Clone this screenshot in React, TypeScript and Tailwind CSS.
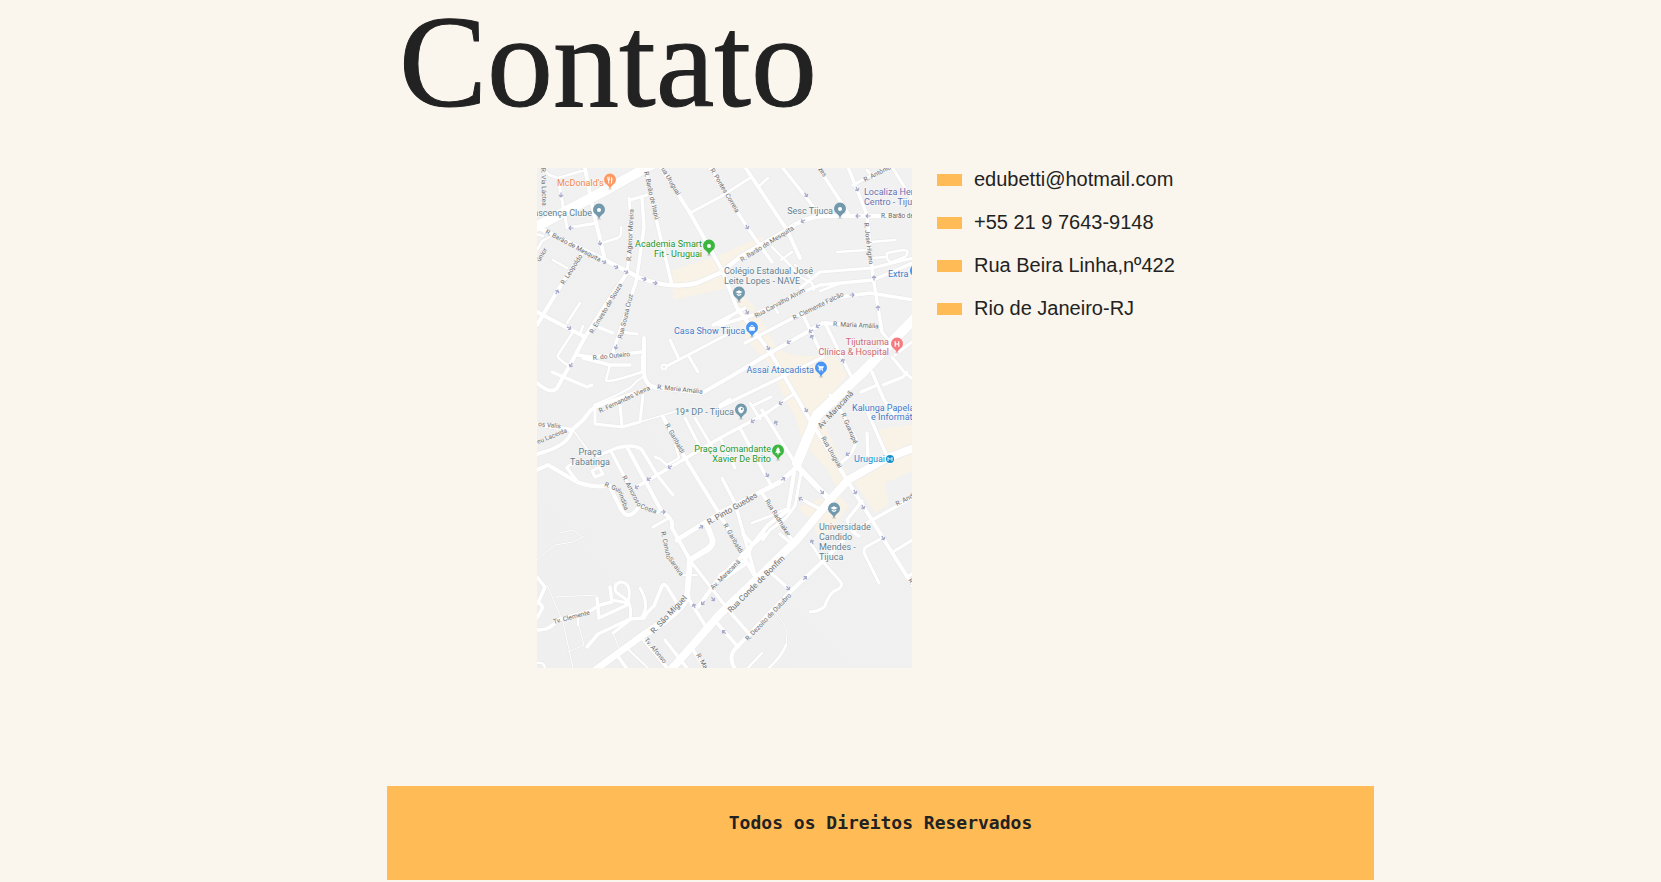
type Road = [width: number, d: string];
type Label = [text: string, x: number, y: number, angle: number, size?: number];
type Place = {
  lines: string[];
  x: number;
  y: number;
  color: string;
  anchor?: 'start' | 'middle' | 'end';
};
type Glyph = 'dot' | 'fork' | 'school' | 'bag' | 'cart' | 'hospital' | 'shield' | 'tree';

const zones = [
  'M135 102L180 88L225 68L229 76L192 100L189 120L136 132Z',
  'M190 118L196 120L216 137L240 180L255 187L300 189L310 207L282 244L290 262L310 305L300 322L291 302L266 276L258 248L248 232L232 196L208 170Z',
  'M312 310L348 290L336 262L376 256V280Z',
  'M314 312L376 284V303L348 315L352 336L338 345L322 321Z',
  'M260 339L283 331L300 325L312 338L296 360L283 374L274 352Z',
];

const roads: Road[] = [
  [2.5, 'M5 -1L12 7L21 10L48 2V-1'],
  [3, 'M21 10L30 60L60 55'],
  [4, 'M48 0L56 42L68 92'],
  [2.5, 'M65 75L81 70Q85 68 84 59'],
  [3, 'M92 30L95 60L90 105M93 32L110 27'],
  [3.5, 'M105 30L107 59L100 109L98 117L76 184'],
  [3.5, 'M108 -1L121 59L135 117'],
  [3, 'M153 45L183 29L213 10'],
  [3.5, 'M172 -2L183 17L210 59L232 90L235 94'],
  [4, 'M45 85L21 122L0 157'],
  [2.5, 'M16 92L30 100M0 82L5 73L13 69M-1 66L6 68'],
  [4, 'M208 -1L250 62M250 62L263 90'],
  [2.5, 'M221 19L231 10'],
  [3.5, 'M245 -1L283 47M281 -1L311 45'],
  [3.5, 'M311 -1L330 47L336 109L345 164L353 174'],
  [3, 'M316 17L356 -4M330 2L337 10M355 -1L380 39'],
  [2.5, 'M300 84L331 82M333 74L358 72M350 85L366 82Q374 82 368 89L355 94Q349 94 350 85M348 89L336 90'],
  [3, 'M263 120L283 104L335 100L376 90'],
  [2.5, 'M235 79L253 97L263 109L275 115L277 122M244 92L255 84M283 123L302 116'],
  [3.5, 'M183 157L216 147L266 124L283 117L336 112L376 95'],
  [3.5, 'M208 175L256 150L283 137L303 129L333 125L376 132'],
  [2.5, 'M236 137L241 145M258 97L273 109'],
  [4, 'M165 225L193 209L233 185L286 155L343 159'],
  [3.5, 'M176 157L208 140'],
  [3.5, 'M183 239L286 189L266 147'],
  [3.5, 'M288 155L315 210'],
  [3, 'M213 235L223 251M215 238L234 229M231 244L258 225'],
  [3, 'M355 189L368 205L376 211M376 173L358 187M346 217L366 209L370 204'],
  [3.5, 'M335 204L347 232L358 248M324 224L338 218M293 227L305 245L318 269Q321 282 305 294'],
  [3.5, 'M328 238L353 295M330 265L331 290'],
  [3.5, 'M225 242L258 295M203 260L235 319'],
  [3.5, 'M231 244L183 270L98 320'],
  [3.5, 'M186 312L198 335L220 414'],
  [3.5, 'M225 325L255 372'],
  [4, 'M257 305L251 342L231 357L219 372L203 390L182 410L161 439'],
  [3, 'M264 305L258 338L249 350L233 362L226 372'],
  [4, 'M126 249L148 290L180 342L196 370L220 412'],
  [3.5, 'M264 331L287 343'],
  [2.5, 'M215 355L236 347L248 341'],
  [3.5, 'M380 327L335 352L318 362M325 333L310 352L316 364L322 368'],
  [3, 'M345 370L329 379Q325 382 329 389L342 415M356 384L380 369M370 409L378 404'],
  [4, 'M307 372L285 394L250 427L200 479Q190 488 198 501'],
  [3, 'M273 374L286 394L303 413Q308 419 297 423Q291 428 288 438Q284 443 273 444'],
  [3.5, 'M233 404L253 422'],
  [2.5, 'M249 477Q245 488 231 501M210 501L225 485'],
  [3.5, 'M155 395L193 444L213 467M180 455L201 479'],
  [3.5, 'M151 430L171 462'],
  [3.5, 'M128 472L150 500M105 470L131 501M80 487L90 501M156 482L168 501'],
  [2, 'M92 482L112 501M146 407H160'],
  [3.5, 'M243 366L256 377M206 366L216 377L228 366M183 407L208 392L214 380M188 410L210 395'],
  [4, 'M0 144L48 169'],
  [4, 'M90 105L73 130L48 169L33 197L20 220Q14 227 0 215'],
  [2.5, 'M43 135L30 155M46 158L43 166M36 164L21 187Q19 190 31 197'],
  [3, 'M15 204L50 219L55 217M56 157L76 165M84 164L100 166'],
  [3.5, 'M41 187L53 189L106 184M46 190L73 197L93 197'],
  [2.5, 'M73 197L69 212Q69 216 105 204V188'],
  [4, 'M107 170V205Q108 218 120 220L165 225'],
  [2, 'M106 209L100 213L93 220L80 227L57 237'],
  [4, 'M113 220L60 238L54 242L46 252L35 262L16 259L0 256M35 262Q32 278 0 286'],
  [3, 'M58 240L58 256L85 259L103 254L106 227M83 237L85 259'],
  [1.5, 'M103 254L130 246L150 240M36 262L53 285'],
  [3, 'M130 198L193 165M133 172L141 189M151 187L161 204'],
  [3, 'M176 157L184 156L193 149M183 237L193 231'],
  [4, 'M0 302L11 297L40 314Q60 321 72 317L83 339Q90 355 101 340'],
  [3.5, 'M75 285L103 339L121 344M40 313L30 300Q31 296 43 295M60 288L80 280Q98 275 105 282L120 307'],
  [3, 'M120 307L136 327'],
  [4, 'M90 279L125 344Q137 350 135 360L153 392'],
  [3, 'M116 359L132 350M55 303L62 299L66 306L58 309Z'],
  [2.5, 'M118 289L123 291L130 297L142 290L138 275'],
  [3, 'M148 250L166 285M158 250L175 279M183 270L198 300M185 310L198 335'],
  [3.5, 'M0 409L8 419Q4 428 1 435Q6 436 5 441L0 450M0 462Q13 463 20 452L53 443L63 437L75 434L73 419'],
  [3, 'M75 432L91 435Q96 414 83 414Q76 417 79 424L91 433Q95 440 93 452L76 465'],
  [3.5, 'M60 430L61 440L62 450L90 437M50 479L61 466L93 451L107 450Q109 445 117 438L125 418Q128 414 132 422L140 435'],
  [3, 'M103 420Q113 437 105 449'],
  [1, 'M0 392L18 377L36 374L48 368M10 417L26 454L36 500M18 429L60 427M41 454L47 477L31 484M23 365L36 362L46 370M238 444Q248 456 250 464L249 478M76 465L82 480'],
  [2.5, 'M0 495Q8 494 8 501M41 448V457'],
  [4, 'M123 -2L153 45L185 102L200 140L233 184L270 247L310 312L346 370L376 418'],
  [4.5, 'M0 59L68 92L103 110Q136 122 160 115L183 105L203 89L250 62Q268 48 290 48L376 48'],
  [5, 'M260 299L243 314L183 345L140 372'],
  [6, 'M170 357L175 370Q178 378 166 384L153 392L150 429'],
  [7, 'M150 429Q143 445 106 467L58 502'],
  [6, 'M261 299L291 330'],
  [8, 'M380 279L350 290L311 312L293 332L260 372L183 446L134 502'],
  [10, 'M378 150L326 204L280 247L260 295'],
  [10, 'M-3 60L73 20L114 -3'],
];

const streets: Label[] = [
  ['R. Vía Láctea', 4, 0, 88],
  ['R. Barão de Mesquita', 8, 65, 28],
  ['R. Leopoldo', 27, 117, -57],
  ['únior', 3, 94, -60],
  ['R. Agenor Moreira', 94, 93, -87],
  ['R. Barão de Itapú', 107, 4, 77],
  ['ua Uruguai', 124, 1, 59],
  ['R. Pontes Correia', 173, 2, 59],
  ['zes', 281, 1, 55],
  ['R. Barão de Mesquita', 205, 94, -32],
  ['R. Antônio', 328, 14, -27],
  ['R. Barão de', 344, 50, 0],
  ['R. José Higino', 327, 55, 83],
  ['R. Ernesto de Souza', 56, 166, -59],
  ['Rua Sousa Cruz', 85, 171, -76],
  ['R. do Outeiro', 56, 192, -6],
  ['R. Fernandes Vieira', 63, 245, -25],
  ['R. Maria Amália', 120, 221, 6],
  ['Rua Carvalho Alvim', 219, 150, -28],
  ['R. Clemente Falcão', 257, 152, -26],
  ['R. Maria Amália', 296, 158, 3],
  ['Av. Maracanã', 284, 261, -47, 8],
  ['R. Garibaldi', 128, 257, 61],
  ['os Valis', 1, 258, 6],
  ['eu Lacerda', 1, 276, -22],
  ['R. Guaxupé', 304, 246, 67],
  ['Rua Uruguai', 284, 270, 60],
  ['R. Amoroso', 85, 309, 62],
  ['Costa', 103, 340, 20],
  ['R. Gui', 67, 318, 22],
  ['rindiba', 81, 324, 70],
  ['R. Pinto Guedes', 172, 357, -30, 8],
  ['Rua Radmaker', 228, 333, 58],
  ['R. Garibaldi', 186, 357, 60],
  ['R. And', 360, 338, -27],
  ['R. Canuto', 124, 364, 78],
  ['Saraiva', 131, 391, 55],
  ['R. São Miguel', 117, 466, -47, 8],
  ['Av. Maracanã', 176, 422, -45],
  ['Rua Conde de Bonfim', 194, 445, -45, 8],
  ['R. Dezoito de Outubro', 211, 473, -46],
  ['Tv. Clemente', 17, 456, -15],
  ['Tv. Afonso', 107, 472, 50],
  ['R. Ma', 159, 487, 60],
  ['R.', 371, 412, 60],
];

const slate = '#5f7f8e';
const blue = '#3f78c8';
const green = '#27962b';

const places: Place[] = [
  { lines: ["McDonald's"], x: 20, y: 18, color: '#f0874d' },
  { lines: ['ascença Clube'], x: 55, y: 48, color: slate, anchor: 'end' },
  { lines: ['Academia Smart', 'Fit - Uruguai'], x: 165, y: 79, color: green, anchor: 'end' },
  { lines: ['Sesc Tijuca'], x: 296, y: 46, color: slate, anchor: 'end' },
  { lines: ['Localiza Her', 'Centro - Tiju'], x: 327, y: 27, color: '#6670b0' },
  { lines: ['Colégio Estadual José', 'Leite Lopes - NAVE'], x: 187, y: 106, color: slate },
  { lines: ['Extra'], x: 351, y: 109, color: blue },
  { lines: ['Casa Show Tijuca'], x: 137, y: 166, color: blue },
  { lines: ['Tijutrauma', 'Clínica & Hospital'], x: 352, y: 177, color: '#cc6870', anchor: 'end' },
  { lines: ['Assaí Atacadista'], x: 277, y: 205, color: blue, anchor: 'end' },
  { lines: ['19ª DP - Tijuca'], x: 138, y: 247, color: slate },
  { lines: ['Kalunga Papela'], x: 315, y: 243, color: blue },
  { lines: ['e Informát'], x: 334, y: 252, color: blue },
  { lines: ['Praça Comandante', 'Xavier De Brito'], x: 234, y: 284, color: green, anchor: 'end' },
  { lines: ['Uruguai'], x: 348, y: 294, color: '#168fce', anchor: 'end' },
  { lines: ['Praça', 'Tabatinga'], x: 53, y: 287, color: slate, anchor: 'middle' },
  { lines: ['Universidade', 'Candido', 'Mendes -', 'Tijuca'], x: 282, y: 362, color: slate },
];

const pins: [x: number, y: number, color: string, glyph: Glyph][] = [
  [73, 12, '#ff9a63', 'fork'],
  [62, 42, '#7399ad', 'dot'],
  [172, 78, '#3db63f', 'dot'],
  [303, 41, '#7399ad', 'dot'],
  [202, 125, '#7399ad', 'school'],
  [379, 103, '#4a96f5', 'dot'],
  [215, 160, '#4a96f5', 'bag'],
  [360, 176, '#f47b7f', 'hospital'],
  [284, 200, '#4a96f5', 'cart'],
  [204, 242, '#7399ad', 'shield'],
  [241, 283, '#3db63f', 'tree'],
  [297, 341, '#7399ad', 'school'],
];

const glyphs: Record<Glyph, string> = {
  dot: 'M-2 0a2 2 0 1 0 4 0a2 2 0 1 0 -4 0Z',
  fork: 'M-2.6 -3.2H-2V-1H-1.6V-3.2H-1V-1H-.6V-3.2H0V-.6L-.8 .4V3.4H-1.8V.4L-2.6 -.6ZM1 -3.2Q2.6 -2.6 2.6 .4H2V3.4H1Z',
  school: 'M-3.6 -1L0 -2.8L3.6 -1L0 .8ZM-2.2 .6L0 1.7L2.2 .6V2L0 3L-2.2 2Z',
  bag: 'M-2.8 -1H-1.6V-1.8Q0 -4.4 1.6 -1.8V-1H2.8V2.8H-2.8ZM-.9 -1H.9V-1.6Q0 -2.8 -.9 -1.6Z',
  cart: 'M-3.4 -2.6H-2L-1.6 -1.8H3L1.8 .8H-1.4L-1.6 1.3H2V1.9H-2.6L-2 .6L-2.8 -1.9H-3.4ZM-1.8 2.2H-.6V3.2H-1.8ZM.9 2.2H2.1V3.2H.9Z',
  hospital: 'M-2.4 -2.8H-1.2V-.6H1.2V-2.8H2.4V2.8H1.2V.6H-1.2V2.8H-2.4Z',
  shield: 'M0 -3.4L2.8 -2V.4Q2.4 2.4 0 3.4Q-2.4 2.4 -2.8 .4V-2ZM-1.6 0H0V2H0V-2H1.6V0Z',
  tree: 'M0 -4L2 -.9H1.3L2.8 1.7H.6V3.4H-.6V1.7H-2.8L-1.3 -.9H-2Z',
};

const arrows: [x: number, y: number, angle: number][] = [
  [24, 27, 90], [34, 60, 180], [63, 75, 80], [67, 94, 28], [79, 99, 28], [89, 104, 28],
  [107, 111, 15], [118, 115, 10], [269, 27, 55], [210, 59, 60], [266, 53, 150], [320, 21, 65],
  [321, 48, 180], [331, 48, 180], [337, 110, -90], [210, 144, 60], [231, 180, 60],
  [274, 163, 150], [281, 158, 150], [252, 174, 150], [275, 169, -115], [306, 193, -115],
  [315, 127, 0], [341, 140, -95], [244, 235, 150], [269, 242, 60], [20, 124, -60],
  [32, 160, 30], [79, 179, 105], [34, 197, 120], [133, 299, 150], [112, 311, 150],
  [100, 319, 150], [126, 344, 0], [164, 359, -30], [216, 253, 150], [239, 255, -115],
  [230, 307, 60], [246, 311, -30], [285, 324, 50], [264, 331, -150], [311, 286, 150],
  [318, 324, 60], [326, 339, 60], [346, 370, 60], [157, 438, -115], [166, 435, 135],
  [176, 431, 50], [187, 464, -135], [251, 420, 50], [268, 410, -45], [275, 374, -115],
];

function StreetMap() {
  return (
    <svg
      viewBox="0 0 375 500"
      role="img"
      aria-label="Mapa da Tijuca, Rio de Janeiro"
      className="block w-[375px] shrink-0 bg-[#f1f1f1] font-[Roboto,sans-serif]"
    >
      <defs>
        <linearGradient id="hill" x1="0" y1="1" x2="0.6" y2="0.3">
          <stop offset="0" stopColor="#efefef" />
          <stop offset="1" stopColor="#f1f1f2" />
        </linearGradient>
      </defs>
      <rect width="375" height="500" fill="url(#hill)" />
      {zones.map((d) => (
        <path key={d} d={d} fill="#f8f2e7" />
      ))}
      <g fill="none" strokeLinejoin="round" strokeLinecap="round">
        <g stroke="#e7e7e9">
          {roads.map(([width, d]) => (
            <path key={d} d={d} strokeWidth={width + 1} />
          ))}
          <circle cx="127" cy="199" r="2.5" strokeWidth="3" />
        </g>
        <g stroke="#ffffff">
          {roads.map(([width, d]) => (
            <path key={d} d={d} strokeWidth={width} />
          ))}
          <circle cx="127" cy="199" r="2.5" strokeWidth="2" />
        </g>
      </g>
      <g fill="none" stroke="#a6aaca" strokeWidth="1.2">
        {arrows.map(([x, y, angle]) => (
          <path key={`${x}-${y}`} transform={`translate(${x} ${y}) rotate(${angle})`} d="M-2.5 0H2M0 -2L2 0L0 2" />
        ))}
      </g>
      <g fill="#6c6c6c" stroke="#f7f7f7" strokeWidth="1" paintOrder="stroke">
        {streets.map(([text, x, y, angle, size = 6.5]) => (
          <text key={`${x}-${y}`} transform={`translate(${x} ${y}) rotate(${angle})`} fontSize={size}>
            {text}
          </text>
        ))}
      </g>
      {pins.map(([x, y, color, glyph]) => (
        <g key={`${x}-${y}`} transform={`translate(${x} ${y})`}>
          <ellipse cx="0" cy="9" rx="2.5" ry="1" fill="#00000018" />
          <path d="M0 9.5Q-.8 6.5 -3 4.8A6 6 0 1 1 3 4.8Q.8 6.5 0 9.5Z" fill={color} />
          <path d={glyphs[glyph]} fill="#ffffff" fillRule="evenodd" />
        </g>
      ))}
      <circle cx="353" cy="291" r="4" fill="#168fce" />
      <path d="M351 293V289.5L353 291.5L355 289.5V293" fill="none" stroke="#ffffff" strokeWidth="1" />
      <g stroke="#fafafa" strokeWidth="1" paintOrder="stroke" fontSize="9">
        {places.map(({ lines, x, y, color, anchor = 'start' }) => (
          <text key={`${x}-${y}`} fill={color} textAnchor={anchor}>
            {lines.map((line, i) => (
              <tspan key={line} x={x} y={y + i * 10}>
                {line}
              </tspan>
            ))}
          </text>
        ))}
      </g>
    </svg>
  );
}

const contacts = ['edubetti@hotmail.com', '+55 21 9 7643-9148', 'Rua Beira Linha,nº422', 'Rio de Janeiro-RJ'];

export default function App() {
  return (
    <div className="min-h-screen bg-[#faf5ed] pb-0.5 pl-[100px] text-[#222222]">
      <div className="mx-auto max-w-[987px]">
        <main>
          <h1 className="px-3 font-['Liberation_Serif',serif] text-[132px] leading-[124px] [-webkit-text-stroke:1px_currentColor]">
            Contato
          </h1>
          <section className="mt-11 flex items-start gap-[25px] pl-[150px]">
            <StreetMap />
            <ul className="flex flex-col gap-5 font-['Liberation_Sans',sans-serif] text-[20px] leading-[23px]">
              {contacts.map((contact) => (
                <li key={contact} className="flex items-baseline gap-3">
                  <span className="h-3 w-[25px] shrink-0 bg-[#ffbb55]" />
                  {contact}
                </li>
              ))}
            </ul>
          </section>
        </main>
        <footer className="mt-[118px] bg-[#ffbb55] pt-[25px] pb-[45px] text-center">
          <p className="font-['DejaVu_Sans_Mono',monospace] text-[18px] leading-6 font-bold">
            Todos os Direitos Reservados
          </p>
        </footer>
      </div>
    </div>
  );
}
